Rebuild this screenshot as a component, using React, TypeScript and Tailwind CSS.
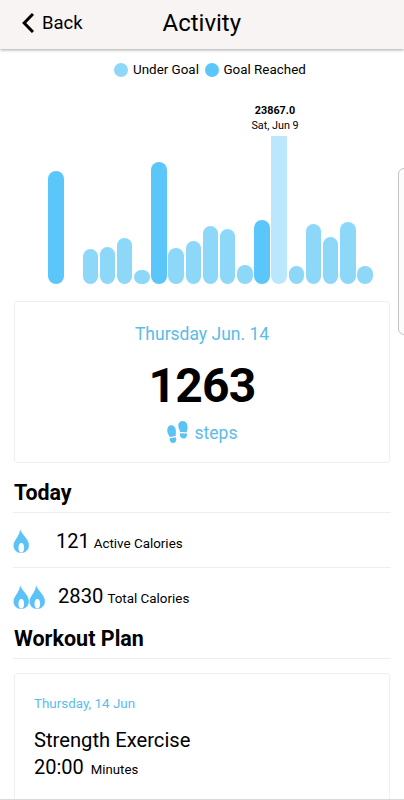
import { clsx } from "clsx";

type Kind = "under" | "reached" | "selected";

const bars: { height: number; kind: Kind }[] = [
  { height: 113, kind: "reached" },
  { height: 0, kind: "under" },
  { height: 35.5, kind: "under" },
  { height: 37, kind: "under" },
  { height: 46, kind: "under" },
  { height: 14.5, kind: "under" },
  { height: 122, kind: "reached" },
  { height: 36, kind: "under" },
  { height: 43, kind: "under" },
  { height: 58.5, kind: "under" },
  { height: 55.5, kind: "under" },
  { height: 19, kind: "under" },
  { height: 64.5, kind: "reached" },
  { height: 148, kind: "selected" },
  { height: 18, kind: "under" },
  { height: 60.5, kind: "under" },
  { height: 47, kind: "under" },
  { height: 62.5, kind: "under" },
  { height: 18, kind: "under" },
];

function Header() {
  return (
    <header className="relative z-10 flex h-[49px] shrink-0 items-center bg-[#f7f4f3] shadow-[0_1px_3px_rgba(0,0,0,0.35)]">
      <button className="flex w-[162.5px] items-center pb-[3px] pl-[22px] text-[18.5px] leading-6">
        <svg viewBox="0 0 12 20" className="mr-[8px] h-5 w-3" fill="none" stroke="#000" strokeWidth="3">
          <path d="M11 1 L2.2 10 L11 19" />
        </svg>
        Back
      </button>
      <h1 className="pb-[3px] text-[24px] leading-7">Activity</h1>
    </header>
  );
}

function Legend() {
  return (
    <div className="flex h-[42px] items-center pl-[114px] text-[13.4px]">
      <span className="mr-[5px] size-[14px] rounded-full bg-[#8dd7f9]" />
      <span className="w-[71.5px] whitespace-nowrap">Under Goal</span>
      <span className="mr-[5px] size-[14px] rounded-full bg-[#5bc6fa]" />
      <span className="whitespace-nowrap">Goal Reached</span>
    </div>
  );
}

function StepsChart() {
  return (
    <div className="relative flex h-[193px] items-end gap-[1.68px] pl-[48.2px]">
      {bars.map((bar, i) => (
        <div
          key={i}
          className={clsx(
            "w-[15.5px]",
            bar.kind === "under" && "rounded-full bg-[#8dd7f9]",
            bar.kind === "reached" && "rounded-full bg-[#5bc6fa]",
            bar.kind === "selected" && "rounded-b-full bg-[#bae7fc]"
          )}
          style={{ height: bar.height }}
        />
      ))}
      <div className="absolute left-[235px] top-[12px] w-20 text-center text-[10.8px] leading-[15px]">
        <div className="font-bold">23867.0</div>
        <div>Sat, Jun 9</div>
      </div>
    </div>
  );
}

function Footprints() {
  return (
    <svg viewBox="0 0 22 24" className="h-6 w-[22px]" fill="#5bc2f3">
      <path d="M3.8 4.3C7 3.9 8.7 6.6 8.9 9.8 9 12 8.6 13.4 8.7 15L2.5 15.9C2.1 14 .2 12.5.2 9.8.2 7 1.4 4.6 3.8 4.3Z" />
      <path d="M2.5 17.2 9 16.2C9.7 19.6 8.9 21.7 6.4 22 3.9 22.3 2.7 20.2 2.5 17.2Z" />
      <path d="M15.2.1C18.6-.3 20.6 2.7 20.6 6c0 2.3-.8 3.6-.7 5.3L13.2 11C13 9.2 11.3 7.5 11.3 4.5 11.3 2.2 12.8.4 15.2.1Z" />
      <path d="M12.9 12.2 20 12.5C20.2 15.7 18.9 17.7 16.4 17.5 13.8 17.3 12.5 15.2 12.9 12.2Z" />
    </svg>
  );
}

function Flame() {
  return (
    <svg viewBox="0 0 16 24" className="h-6 w-4 shrink-0" fill="#5bc2f8">
      <path d="M7 0C7.8 4.7 15.9 9.6 15.9 16.3 15.9 20.9 12.5 24 8.2 24S.5 20.9.5 16.5C.5 11 7 7.5 7 0Z" />
      <ellipse cx="8.3" cy="18.7" rx="2.8" ry="4.7" fill="#fff" />
    </svg>
  );
}

function StepsCard() {
  return (
    <section className="mx-[14px] mt-[17px] flex h-[162px] flex-col items-center rounded-[3px] border border-[#f0f0f0]">
      <div className="mt-[20px] text-[17.5px] leading-6 text-[#5bbce8]">Thursday Jun. 14</div>
      <div className="mt-[12px] text-[48px] font-bold leading-[56px] tracking-[-0.8px]">1263</div>
      <div className="mt-[7px] flex items-center text-[17.5px] leading-6 text-[#5bbce8]">
        <Footprints />
        <span className="ml-[6px]">steps</span>
      </div>
    </section>
  );
}

function Today() {
  return (
    <section className="mx-[13px]">
      <h2 className="flex h-[50px] items-center border-b border-[#eeeeee] pl-px pt-[11px] text-[21.4px] font-bold">
        Today
      </h2>
      <div className="flex h-[55px] items-center border-b border-[#eeeeee] pt-[2px]">
        <div className="flex w-[43px]">
          <Flame />
        </div>
        <div className="flex items-baseline gap-[4px]">
          <span className="text-[20px]">121</span>
          <span className="text-[13.4px]">Active Calories</span>
        </div>
      </div>
      <div className="flex h-[55px] items-center pt-[2px]">
        <div className="flex w-[45px]">
          <Flame />
          <Flame />
        </div>
        <div className="flex items-baseline gap-[4px]">
          <span className="text-[20.2px]">2830</span>
          <span className="text-[13.4px]">Total Calories</span>
        </div>
      </div>
    </section>
  );
}

function WorkoutPlan() {
  return (
    <section>
      <h2 className="mx-[13px] flex h-[36px] items-center border-b border-[#eeeeee] pb-[3px] pl-px text-[21.5px] font-bold">
        Workout Plan
      </h2>
      <div className="mx-[14px] mt-[14px] h-[160px] rounded-[3px] border border-[#f0f0f0] pl-[19px] pt-[20px]">
        <div className="text-[13.4px] leading-5 text-[#5bbce8]">Thursday, 14 Jun</div>
        <div className="mt-[12px] text-[20.2px] leading-7">Strength Exercise</div>
        <div className="flex items-baseline gap-[7px] leading-[27px]">
          <span className="text-[20px]">20:00</span>
          <span className="text-[13.2px]">Minutes</span>
        </div>
      </div>
    </section>
  );
}

export default function App() {
  return (
    <div className="relative flex h-[800px] w-[404px] flex-col overflow-hidden bg-white font-['Roboto',sans-serif] text-black">
      <Header />
      <main className="min-h-0 flex-1 overflow-hidden border-b border-[#d9d9d9]">
        <Legend />
        <StepsChart />
        <StepsCard />
        <Today />
        <WorkoutPlan />
      </main>
      {/* edge panel handle */}
      <div className="absolute left-[398px] top-[168px] h-[167px] w-4 rounded-[6px] border border-[#c4c4c4] bg-[#fcfcfc]" />
    </div>
  );
}
